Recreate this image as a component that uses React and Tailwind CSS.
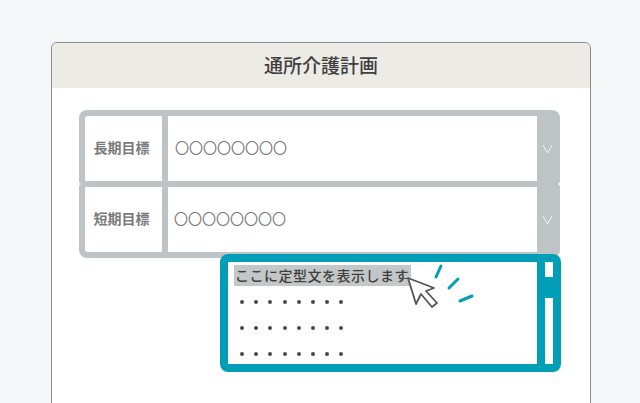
const jp = { fontFamily: '"Noto Sans CJK JP", sans-serif' };

function Chevron() {
  return (
    <svg className="mr-[2px]" width="11" height="10" viewBox="0 0 11 10" fill="none" stroke="#f2f4f4" strokeWidth="1">
      <polyline points="1,1 5.5,9 10,1" />
    </svg>
  );
}

function Row({ label, className, pad }) {
  return (
    <div className={"flex h-[74px] border-l-[6px] border-[#bec3c6] bg-white " + className}>
      <div className="flex w-[77px] items-center justify-center pb-[2px] pr-[4px] text-[14px] font-bold text-[#7a7a7a]">
        {label}
      </div>
      <div className={"flex flex-1 items-center border-l-[6px] border-[#bec3c6] pb-[2px] text-[14px] text-[#757575] " + pad}>
        〇〇〇〇〇〇〇〇
      </div>
      <div className="flex w-[23px] items-center justify-center bg-[#bec3c6]">
        <Chevron />
      </div>
    </div>
  );
}

function Dots() {
  return (
    <div className="flex h-[26px] items-center gap-[10.2px] pl-[6px]">
      {[0, 1, 2, 3, 4, 5, 6, 7].map((i) => (
        <span key={i} className="h-[4px] w-[4px] rounded-full bg-[#4a4a4a]" />
      ))}
    </div>
  );
}

export default function App() {
  return (
    <div className="h-[403px] w-[640px] overflow-hidden bg-[#f4f7f8] pt-[42px] pl-[51px]" style={jp}>
      <div className="h-[380px] w-[540px] rounded-t-md border border-[#8c8c8c] bg-white">
        {/* HEADER */}
        <div className="flex h-[45px] items-center justify-center rounded-t-md bg-[#ecebe6] text-[19px] font-medium text-[#3f3f3f]">
          通所介護計画
        </div>

        {/* ROWS */}
        <div className="relative ml-[27px] mt-[22px] w-[481px]">
          <Row label="長期目標" className="rounded-t-lg rounded-b-[3px] border-t-[6px] border-b-[3px]" pad="pl-[7px]" />
          <Row label="短期目標" className="rounded-b-lg rounded-t-[3px] border-t-[3px] border-b-[6px]" pad="pl-[6px]" />

          {/* POPUP */}
          <div className="absolute left-[141px] top-[144px] flex h-[118px] w-[341px] rounded-lg border-8 border-[#009fb7] bg-white">
            <div className="flex-1 pl-[6px] pt-[3px]">
              <div className="mb-[3px] flex h-[21px] w-[177px] items-center whitespace-nowrap bg-[#c4c7c8] pb-[2px] pl-[1px] text-[14px] font-medium leading-none tracking-[0.5px] text-[#3f3f3f]">
                ここに定型文を表示します
              </div>
              <Dots />
              <Dots />
              <Dots />
            </div>
            <div className="flex w-[16px] flex-col border-l-8 border-[#009fb7]">
              <div className="h-[15px]" />
              <div className="h-[21px] bg-[#009fb7]" />
            </div>

            {/* CURSOR */}
            <svg className="absolute left-[172px] top-[-4px]" width="80" height="60" viewBox="0 0 80 60" fill="none">
              <line x1="4" y1="20.5" x2="9" y2="20.5" stroke="#555555" strokeWidth="1" />
              <polygon
                points="8,20 34,30 26,33 37,45 32,49 21,36 16,46"
                fill="#ffffff"
                stroke="#555555"
                strokeWidth="1.8"
                strokeLinejoin="round"
              />
              <g stroke="#009fb7" strokeWidth="3" strokeLinecap="round">
                <line x1="36" y1="19" x2="41" y2="8" />
                <line x1="49" y1="30" x2="58" y2="21" />
                <line x1="60" y1="43" x2="72" y2="38" />
              </g>
            </svg>
          </div>
        </div>
      </div>
    </div>
  );
}
